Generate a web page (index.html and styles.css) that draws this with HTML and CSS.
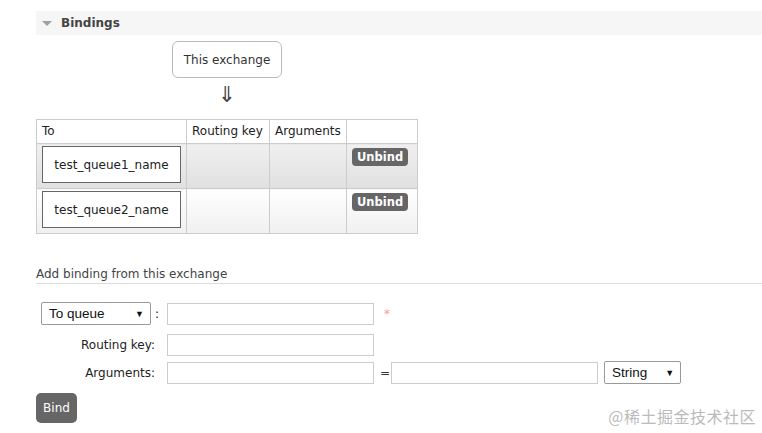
FILE: index.html
```html
<!DOCTYPE html>
<html>
<head>
<meta charset="utf-8">
<link rel="stylesheet" href="styles.css">
</head>
<body>
<div class="section">
  <div class="section-head"><span class="tri"></span><span class="title">Bindings</span></div>
  <div class="flow">
    <div class="exch">This exchange</div>
    <div class="arrow">&#8659;</div>
  </div>
  <table class="bindings">
    <thead>
      <tr><th class="c-to">To</th><th class="c-rk">Routing key</th><th class="c-args">Arguments</th><th class="c-act"></th></tr>
    </thead>
    <tbody>
      <tr class="alt1">
        <td class="c-to"><div class="qbox">test_queue1_name</div></td>
        <td></td><td></td>
        <td class="c-act"><span class="btn-sm">Unbind</span></td>
      </tr>
      <tr class="alt2">
        <td class="c-to"><div class="qbox">test_queue2_name</div></td>
        <td></td><td></td>
        <td class="c-act"><span class="btn-sm">Unbind</span></td>
      </tr>
    </tbody>
  </table>

  <h3 class="sub">Add binding from this exchange</h3>

  <div class="form">
    <div class="row row-first">
      <div class="lbl lbl-first"><span class="sel sel-q">To queue<span class="caret">&#9660;</span></span><span class="colon">:</span></div>
      <div class="field"><span class="inp"></span><span class="req">*</span></div>
    </div>
    <div class="row row-second">
      <div class="lbl">Routing key:</div>
      <div class="field"><span class="inp"></span></div>
    </div>
    <div class="row">
      <div class="lbl">Arguments:</div>
      <div class="field"><span class="inp"></span><span class="eq">=</span><span class="inp"></span><span class="sel sel-s">String<span class="caret">&#9660;</span></span></div>
    </div>
  </div>
  <div class="bind-row"><span class="btn">Bind</span></div>
</div>
<div class="watermark">@稀土掘金技术社区</div>
</body>
</html>
```

FILE: styles.css
```css
html, body { margin: 0; padding: 0; background: #fff; }
body {
  font-family: "DejaVu Sans", Verdana, sans-serif;
  font-size: 12px;
  color: #222;
  width: 762px;
  height: 433px;
  overflow: hidden;
  position: relative;
}
.section { padding: 11px 0 0 36px; }
.section-head {
  background: #f6f6f6;
  height: 24px;
  display: flex;
  align-items: center;
}
.tri {
  width: 0; height: 0;
  margin-left: 6px;
  border-left: 5px solid transparent;
  border-right: 5px solid transparent;
  border-top: 5px solid #a0a0a0;
}
.title {
  margin-left: 9px;
  font-weight: bold;
  font-size: 12px;
  color: #444;
}
.flow {
  display: flex;
  flex-direction: column;
  align-items: center;
  width: 382px;
  padding-top: 6px;
}
.exch {
  border: 1px solid #bbb;
  border-radius: 6px;
  box-sizing: border-box;
  width: 110px;
  height: 37px;
  display: flex;
  align-items: center;
  justify-content: center;
  color: #333;
}
.arrow {
  margin-top: 5px;
  height: 24px;
  font-size: 22px;
  line-height: 24px;
  color: #444;
}
.bindings {
  border-collapse: collapse;
  margin-top: 12px;
}
.bindings th, .bindings td {
  border: 1px solid #ccc;
  padding: 0 5px;
  text-align: left;
  vertical-align: top;
}
.bindings th {
  font-weight: normal;
  line-height: 23px;
  vertical-align: middle;
}
.c-to { width: 139px; }
.c-rk { width: 72px; }
.c-args { width: 66px; }
.c-act { width: 60px; }
.bindings td.c-to { padding: 2px 5px 5px 5px; }
.alt1 td { background: linear-gradient(#f0f0f0, #e0e0e0); }
.alt2 td { background: linear-gradient(#ffffff, #f0f0f0); }
.qbox {
  border: 1px solid #666;
  background: #fff;
  width: 139px;
  height: 37px;
  box-sizing: border-box;
  display: flex;
  align-items: center;
  justify-content: center;
  color: #222;
}
.bindings td.c-act { padding: 4px 5px 0 5px; line-height: 18px; }
.btn-sm {
  display: inline-block;
  vertical-align: top;
  background: #666;
  color: #fff;
  font-weight: bold;
  font-size: 11.5px;
  border-radius: 4px;
  padding: 2px 5px 1px;
  line-height: 15px;
}
.sub {
  margin: 32px 0 0 0;
  font-weight: normal;
  font-size: 12px;
  color: #444;
  padding-bottom: 1px;
  border-bottom: 1px solid #ddd;
  line-height: 16px;
}
.form { margin-top: 18px; }
.row {
  display: flex;
  align-items: center;
  margin-bottom: 5px;
}
.row-first { margin-bottom: 9px; }
.lbl {
  width: 114px;
  min-width: 0;
  flex-shrink: 0;
  padding-left: 5px;
  display: flex;
  justify-content: flex-end;
  align-items: center;
  color: #222;
}
.lbl-first { justify-content: flex-start; }
.field {
  display: flex;
  align-items: center;
  margin-left: 12px;
}
.inp {
  display: block;
  width: 207px;
  height: 22px;
  box-sizing: border-box;
  border: 1px solid #ccc;
  background: #fff;
}
.req { color: #f99; margin-left: 10px; font-size: 12px; }
.eq { margin: 0 1px 0 6px; color: #333; }
.sel {
  font-family: "Liberation Sans", Arial, sans-serif;
  font-size: 13.5px;
  border: 1px solid #999;
  border-radius: 2px;
  height: 23px;
  box-sizing: border-box;
  display: flex;
  flex-shrink: 0;
  align-items: center;
  justify-content: space-between;
  padding: 0 6px 0 7px;
  color: #111;
  background: #fff;
}
.sel-q { width: 110px; }
.sel-s { width: 77px; margin-left: 6px; }
.caret { font-size: 9px; color: #111; }
.colon { margin-left: 4px; flex-shrink: 0; }
.bind-row { margin-top: 9px; }
.btn {
  display: inline-block;
  background: #666;
  color: #fff;
  border-radius: 5px;
  width: 41px;
  height: 30px;
  line-height: 30px;
  text-align: center;
  font-size: 12px;
}
.watermark {
  position: absolute;
  right: 6px;
  bottom: 5px;
  font-family: "Noto Sans CJK SC", sans-serif;
  font-size: 16px;
  color: #bbb;
  letter-spacing: 0.5px;
}
```
